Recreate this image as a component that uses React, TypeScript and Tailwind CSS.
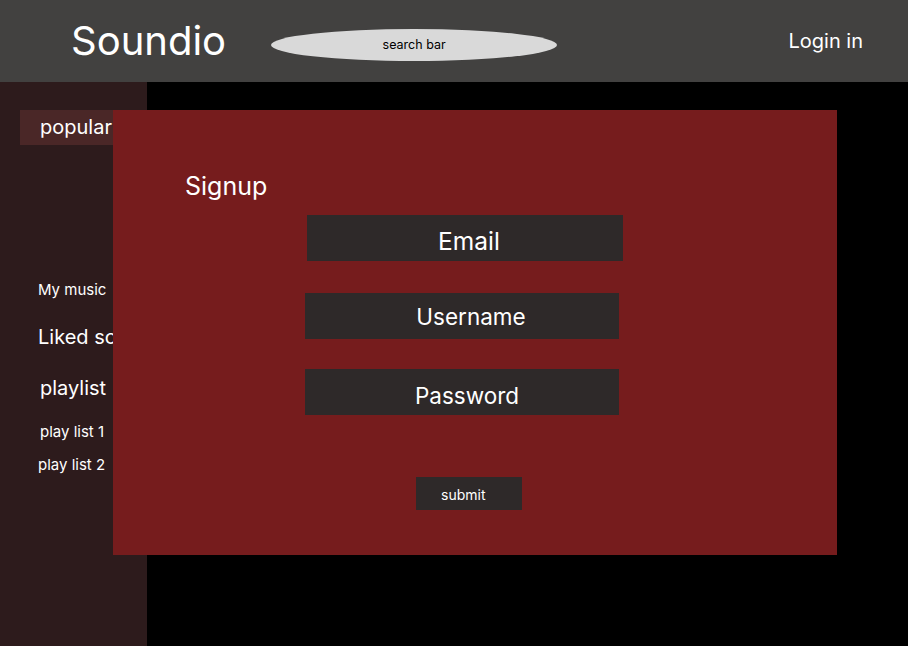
export default function App() {
  return (
    <div className="relative flex h-[646px] w-full flex-col overflow-hidden bg-black font-['Inter',sans-serif] text-white">
      <header className="flex h-[82px] shrink-0 items-center bg-[#424140]">
        <h1 className="ml-[71px] text-[40px] leading-none">Soundio</h1>
        <div className="ml-[45px] mt-[8px] flex h-[32px] w-[286px] items-center justify-center rounded-[50%] bg-[#d9d9d9] text-[12.5px] text-black">
          search bar
        </div>
        <button className="ml-auto mr-[45px] text-[20px]">Login in</button>
      </header>

      <div className="flex flex-1">
        <aside className="w-[147px] overflow-hidden bg-[#2d1b1c] pt-[28px]">
          <div className="ml-[20px] flex h-[35px] items-center bg-[#4a2727] pb-[2px] pl-[20px] text-[20px]">
            popular
          </div>
          <nav className="flex flex-col whitespace-nowrap">
            <span className="ml-[38px] mt-[134px] text-[15px]">My music</span>
            <span className="ml-[38px] mt-[20px] text-[20px]">Liked songs</span>
            <span className="ml-[40px] mt-[21px] text-[20px]">playlist</span>
            <span className="ml-[40px] mt-[18px] text-[15px]">play list 1</span>
            <span className="ml-[38px] mt-[11px] text-[15px]">play list 2</span>
          </nav>
        </aside>
        <main className="flex-1 bg-black" />
      </div>

      {/* signup modal */}
      <div className="absolute left-[113px] top-[110px] flex h-[445px] w-[724px] flex-col bg-[#761c1d]">
        <h2 className="ml-[72px] mt-[61px] text-[25px] leading-[30px]">Signup</h2>
        <div className="ml-[194px] mt-[14px] flex h-[46px] w-[316px] items-center justify-center bg-[#2e2929] pl-[8px] pt-[6px] text-[24.5px]">
          Email
        </div>
        <div className="ml-[192px] mt-[32px] flex h-[46px] w-[314px] items-center justify-center bg-[#2e2929] pl-[18px] pt-[2px] text-[22.5px]">
          Username
        </div>
        <div className="ml-[192px] mt-[30px] flex h-[46px] w-[314px] items-center justify-center bg-[#2e2929] pl-[10px] pt-[8px] text-[22.5px]">
          Password
        </div>
        <button className="ml-[303px] mt-[62px] flex h-[33px] w-[106px] items-center bg-[#2e2929] pl-[25px] pt-[2px] text-[14px]">
          submit
        </button>
      </div>
    </div>
  )
}
